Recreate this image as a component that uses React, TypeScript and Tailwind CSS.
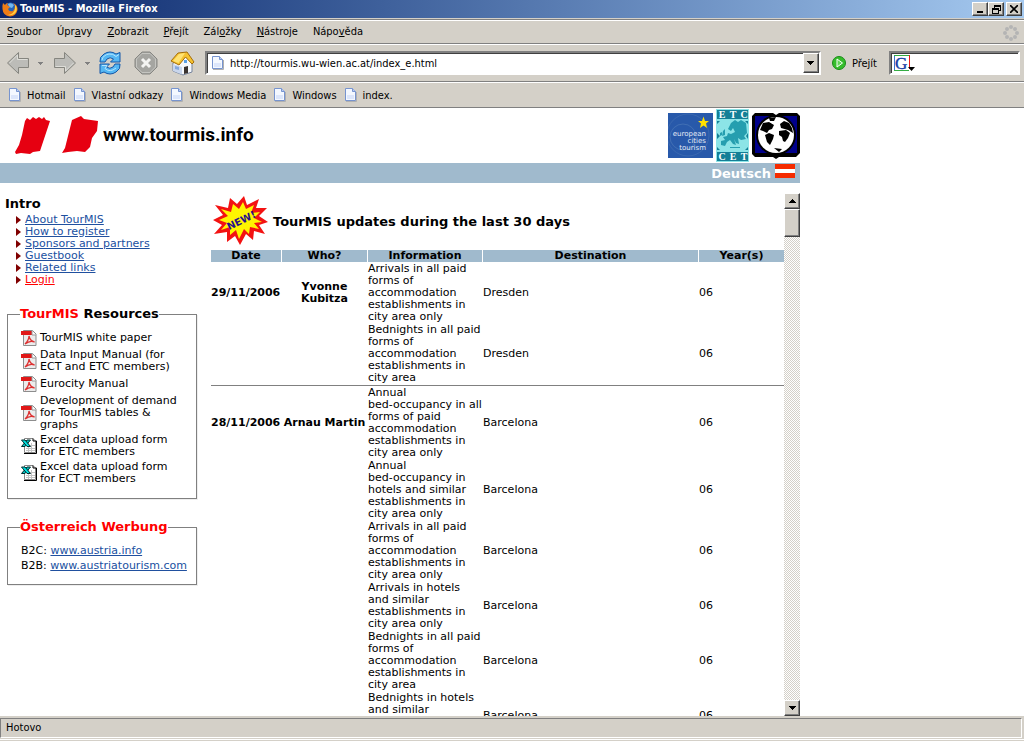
import React from "react";

const body = '[font-family:"DejaVu_Sans",sans-serif]';

function PageIcon() {
  return (
    <svg width="13" height="16" viewBox="0 0 13 16" className="shrink-0" aria-hidden="true">
      <path d="M2 14.500H12.500V5" fill="none" stroke="#b0b0b0" />
      <path d="M1.500 1.500H8.500L11.500 4.500V13.500H1.500Z" fill="#f4f8ff" stroke="#7794cf" />
      <path d="M3 8H10V12H3Z" fill="#dce6fb" />
      <path d="M8.500 1.500V4.500H11.500" fill="#b9ccf5" stroke="#7794cf" />
    </svg>
  );
}

function Firefox() {
  return (
    <svg width="16" height="16" viewBox="0 0 16 16" className="shrink-0" aria-hidden="true">
      <circle cx="8.500" cy="7.500" r="6" fill="#2563b8" />
      <path d="M6 3Q9 1 12 4L10 7L7 6Z" fill="#72b7ef" />
      <path d="M1 2L3 4Q4 2 6 2L5 4L8 6L6 8Q7 11 11 10Q13 8 13 5Q12 3 11 2Q16 4 15.500 9Q14 15 8 15.500Q1 15 .5 8Q.3 4 1 2Z" fill="#ee7c16" />
      <path d="M13 4Q16 7 14 11Q11 15 6 14Q12 13 13 8Z" fill="#ffd23f" />
    </svg>
  );
}

function Arrow({ right = false }: { right?: boolean }) {
  return (
    <svg width="24" height="24" viewBox="0 0 24 24" className={right ? "rotate-180" : ""} aria-hidden="true">
      <path d="M1.500 12L12.500 1.500V7.500H22.500V16.500H12.500V22.500Z" fill="#bcbcb8" stroke="#85857f" />
      <path d="M3.500 12L11.500 4V8.500H21.500" fill="none" stroke="#deded9" />
    </svg>
  );
}

function SmallArrow() {
  return <svg width="5" height="3" viewBox="0 0 5 3" shapeRendering="crispEdges" aria-hidden="true"><path d="M0 0H5V1H4V2H3V3H2V2H1V1H0Z" fill="#808080" /></svg>;
}

function Reload() {
  return (
    <svg width="24" height="24" viewBox="0 0 24 24" aria-hidden="true">
      <path d="M2 11Q1 6 6 3Q12 -1 18 3L22 1.500V11H12.500L15.500 8Q12 5.500 9 8L7 11Z" fill="#55b7f3" stroke="#1457a8" />
      <path d="M22 13Q23 18 18 21Q12 25 6 21L2 22.500V13H11.500L8.500 16Q12 18.500 15 16L17 13Z" fill="#55b7f3" stroke="#1457a8" />
      <path d="M4 9Q5 4 11 3Q15 2.500 18 5.500L21 3.500M4 14.500H9L7 17.500Q12 22 18 17" fill="none" stroke="#b5e5ff" />
    </svg>
  );
}

function Stop() {
  return (
    <svg width="24" height="24" viewBox="0 0 24 24" aria-hidden="true">
      <path d="M8 1H16L23 8V16L16 23H8L1 16V8Z" fill="#a5a5a1" stroke="#868682" />
      <path d="M8 2.500H16L21.500 8V16L16 21.500H8L2.500 16V8Z" fill="none" stroke="#c5c5c1" />
      <path d="M8 8L16 16M16 8L8 16" stroke="#f4f4f2" strokeWidth="3" />
    </svg>
  );
}

function Home() {
  return (
    <svg width="25" height="25" viewBox="0 0 25 25" aria-hidden="true">
      <path d="M3 12L9 8L15 5L22 12V21L13 24L3 20Z" fill="#f6f8fc" stroke="#75839c" />
      <path d="M3 13L12 16V23.500L3 20Z" fill="#c9d6ec" />
      <path d="M1 10L8 2L17 1L24 11L22 13L15.500 6L9 14Z" fill="#f5c230" stroke="#a46d0a" />
      <path d="M3 10L9 3L15 2L8.500 12Z" fill="#ffe374" />
      <path d="M14 16L18 15V22L14 23Z" fill="#3b3431" />
      <path d="M5 15L9 16V19L5 18Z" fill="#86a8de" />
      <rect x="14" y="9" width="3" height="3" fill="#5aa0e6" />
    </svg>
  );
}

function Triangle({ up = false }: { up?: boolean }) {
  return (
    <svg width="7" height="4" viewBox="0 0 7 4" className={up ? "rotate-180" : ""} shapeRendering="crispEdges" aria-hidden="true">
      <path d="M0 0H7V1H6V2H5V3H4V4H3V3H2V2H1V1H0Z" />
    </svg>
  );
}

function Dots() {
  const pts = [[8, 2], [12, 4], [14, 8], [12, 12], [8, 14], [4, 12], [2, 8], [4, 4]];
  return (
    <svg width="16" height="16" viewBox="0 0 16 16" aria-hidden="true">
      {pts.map(([x, y]) => <circle key={`${x}-${y}`} cx={x} cy={y} r="2" fill="#b4b4b4" />)}
    </svg>
  );
}

function Pdf() {
  return (
    <svg width="16" height="16" viewBox="0 0 16 16" className="shrink-0" aria-hidden="true">
      <path d="M2.500 .5H11.500L15 4V15.500H2.500Z" fill="#ececec" stroke="#8d8d8d" />
      <path d="M0 1H11V5H0Z" fill="#e01818" />
      <path d="M11 1V5H15" fill="#fff" stroke="#999" />
      <path d="M4 14Q8 10 8 6Q9 11 13.500 12Q9 10 4 14" fill="none" stroke="#dd3030" strokeWidth="1.300" />
    </svg>
  );
}

function Excel() {
  return (
    <svg width="16" height="16" viewBox="0 0 16 16" className="shrink-0" aria-hidden="true">
      <path d="M3.500 .5H12L14.500 3V14.500H3.500Z" fill="#fff" stroke="#888" />
      <path d="M12 .5V3H15.500V15.500H3" fill="none" stroke="#000" />
      <path d="M5 7.500H14M5 10.500H14M5 12.500H14M7.500 5V14M10.500 5V14" stroke="#c4c4c4" />
      <path d="M6 2H9.500L4 8.500H.5Z" fill="#00c4c4" stroke="#002c2c" />
      <path d="M.5 2H4L9.500 8.500H6Z" fill="#00e0e0" stroke="#002c2c" />
    </svg>
  );
}

function BrandMark() {
  return (
    <svg width="84" height="40" viewBox="0 0 84 40" aria-hidden="true">
      <path d="M10 5L12 2L15 4L18 1L21 3L24 1L27 3L29 1L31 4L35 5L32 14L25 35L18 36L15 38L6 37L1 38L0 36L4 29L7 19Z" fill="#e60011" />
      <path d="M57 4L66 0L69 3L76 4L83 5L82 15L77 22L75 31L70 36L62 35L53 36L47 37L50 32L53 20Z" fill="#e60011" />
    </svg>
  );
}

function CitiesLogo() {
  return (
    <svg width="45" height="45" viewBox="0 0 45 45" role="img" aria-label="european cities tourism">
      <rect width="45" height="45" fill="#2859aa" />
      <circle cx="15" cy="24" r="13" fill="none" stroke="#416fb4" />
      <circle cx="20" cy="22" r="21" fill="none" stroke="#3a68b0" />
      <path d="M35.500 3.500L37 8H41L38 10.500L39 15L35.500 12.500L32 15L33 10.500L30 8H34Z" fill="#ffe000" />
      <g fill="#e4ebf5" fontSize="7" fontFamily="DejaVu Sans" textAnchor="end"><text x="38" y="23">european</text><text x="38" y="30">cities</text><text x="38" y="37">tourism</text></g>
    </svg>
  );
}

function EtcLogo() {
  return (
    <svg width="33" height="53" viewBox="0 0 33 53" role="img" aria-label="ETC CET">
      <rect width="33" height="53" fill="#8ce4e7" />
      <path d="M1 1H32V10H1ZM1 43H32V52H1Z" fill="#147f96" />
      <path d="M1 12H4L1 15ZM32 12H29L32 15ZM1 41V38L4 41ZM32 41V38L29 41ZM1 24L4 27L1 30ZM32 24L30 27L32 30Z" fill="#147f96" />
      <path d="M12 20L15 14L19 11L22 13L25 11L30 14L31 24L28 27L30 30L25 31L22 29L23 35L20 34L18 30L20 36L17 35L14 31L11 33L9 37L5 36L5 32L9 31L7 28L11 27L12 24L15 25L19 23L17 19L15 22Z" fill="#259eaf" />
      <path d="M7 22L9 20V26L6 27ZM4 24L6 23V26L4 27ZM14 38H24V39H14Z" fill="#259eaf" />
      <g fill="#fff" fontSize="10" fontWeight="bold" fontFamily="Liberation Serif" textAnchor="middle"><text x="6" y="9">E</text><text x="17" y="9">T</text><text x="28" y="9">C</text><text x="6" y="51">C</text><text x="17" y="51">E</text><text x="28" y="51">T</text></g>
    </svg>
  );
}

function Globe() {
  return (
    <svg width="48" height="46" viewBox="0 0 48 46" role="img" aria-label="World">
      <path d="M3 0H21L24 2L27 0H45L48 3V40L44 44H27L24 46L21 44H3L0 41V3Z" />
      <path d="M3 3H45V40H3Z" fill="#00008b" />
      <circle cx="24" cy="22" r="20" />
      <circle cx="24" cy="22" r="18" fill="#fff" />
      <path d="M8 17L11 10L17 9L22 12L20 16L17 17L15 20L11 18ZM13 22L17 20L22 22L21 26L18 32L15 29ZM17 5L24 4L22 8L18 8ZM28 11L32 8L37 10L40 15L41 20L36 17L29 15ZM27 18L34 17L38 20L36 25L33 29L31 28L30 24L27 22ZM22 35L30 36L27 39Z" />
    </svg>
  );
}

function NewBurst() {
  return (
    <svg width="56" height="50" viewBox="0 0 56 50" role="img" aria-label="New!">
      <path d="M2 9L15 12L17 2L24 8L31 0L34 9L46 3L43 12L54 12L46 20L55 26L46 29L52 38L41 35L40 44L33 38L27 49L22 40L14 46L14 36L1 38L9 29L0 24L10 19Z" fill="#f31212" />
      <path d="M8 13L18 16L20 8L26 13L30 6L33 13L41 9L38 17L47 16L41 22L49 26L41 27L46 33L37 31L36 38L31 33L26 43L23 34L17 39L17 31L8 34L14 27L6 24L15 20Z" fill="#fff500" />
      <text x="28" y="28" textAnchor="middle" fontFamily="DejaVu Sans" fontSize="10" fontWeight="bold" fill="#28108b" transform="rotate(-26 28 24)">NEW!</text>
    </svg>
  );
}

function Restore() {
  return <svg width="9" height="9" viewBox="0 0 9 9" shapeRendering="crispEdges" aria-hidden="true"><path d="M2 0H9V6H7V5H8V2H3V3H2ZM0 3H7V9H0ZM1 5V8H6V5Z" fillRule="evenodd" /></svg>;
}

const raised = "border border-t-white border-l-white border-b-[#404040] border-r-[#404040] bg-[#d4d0c8] shadow-[inset_-1px_-1px_0_#808080]";
const sunken = "border-2 border-t-[#808080] border-l-[#808080] border-b-white border-r-white shadow-[inset_1px_1px_0_#404040]";

const menus = [["", "S", "oubor"], ["Úpr", "a", "vy"], ["", "Z", "obrazit"], ["", "P", "řejít"], ["Zál", "o", "žky"], ["", "N", "ástroje"], ["Nápo", "v", "ěda"]];
const bookmarks = ["Hotmail", "Vlastní odkazy", "Windows Media", "Windows", "index."];
const links = ["About TourMIS", "How to register", "Sponsors and partners", "Guestbook", "Related links", "Login"];
const resources = [
  { lines: ["TourMIS white paper"], excel: false },
  { lines: ["Data Input Manual (for", "ECT and ETC members)"], excel: false },
  { lines: ["Eurocity Manual"], excel: false },
  { lines: ["Development of demand", "for TourMIS tables &", "graphs"], excel: false },
  { lines: ["Excel data upload form", "for ETC members"], excel: true },
  { lines: ["Excel data upload form", "for ECT members"], excel: true },
];

type Row = { date?: string; who?: string[]; info: string[]; city: string };
const groups: Row[][] = [
  [
    { date: "29/11/2006", who: ["Yvonne", "Kubitza"], info: ["Arrivals in all paid", "forms of", "accommodation", "establishments in", "city area only"], city: "Dresden" },
    { info: ["Bednights in all paid", "forms of", "accommodation", "establishments in", "city area"], city: "Dresden" },
  ],
  [
    { date: "28/11/2006", who: ["Arnau Martin"], info: ["Annual", "bed-occupancy in all", "forms of paid", "accommodation", "establishments in", "city area only"], city: "Barcelona" },
    { info: ["Annual", "bed-occupancy in", "hotels and similar", "establishments in", "city area only"], city: "Barcelona" },
    { info: ["Arrivals in all paid", "forms of", "accommodation", "establishments in", "city area only"], city: "Barcelona" },
    { info: ["Arrivals in hotels", "and similar", "establishments in", "city area only"], city: "Barcelona" },
    { info: ["Bednights in all paid", "forms of", "accommodation", "establishments in", "city area"], city: "Barcelona" },
    { info: ["Bednights in hotels", "and similar", "establishments in", "city area"], city: "Barcelona" },
  ],
];

function Lines({ lines }: { lines: string[] }) {
  return <>{lines.map((l, i) => <span key={i} className="block whitespace-nowrap">{l}</span>)}</>;
}

function Chrome() {
  return (
    <header className="shrink-0 bg-[#d4d0c8]">
      <div className="flex h-[18px] items-center gap-0.5 bg-gradient-to-r from-[#0a246a] to-[#a6caf0] px-0.5 text-white">
        <Firefox />
        <h1 className="flex-1 text-[11px] font-bold">TourMIS - Mozilla Firefox</h1>
        <div className="flex">
          <button aria-label="Minimize" className={`flex h-3.5 w-4 items-end justify-center pb-0.5 text-black ${raised}`}><span className="h-0.5 w-1.5 bg-black" /></button>
          <button aria-label="Restore" className={`mr-0.5 flex h-3.5 w-4 items-center justify-center text-black ${raised}`}><Restore /></button>
          <button aria-label="Close" className={`flex h-3.5 w-4 items-center justify-center text-black ${raised}`}><svg width="8" height="8" viewBox="0 0 8 8" aria-hidden="true"><path d="M0 0L8 8M8 0L0 8" stroke="#000" strokeWidth="1.600" /></svg></button>
        </div>
      </div>
      <div className="mt-px flex h-[25px] items-center justify-between border-y border-t-[#808080] border-b-[#808080] px-[7px] pt-0.5 shadow-[inset_0_1px_0_#fff]">
        <nav className="flex gap-[15px]">
          {menus.map(([a, b, c]) => <button key={a + b + c}>{a}<u>{b}</u>{c}</button>)}
        </nav>
        <div className="-mr-0.5"><Dots /></div>
      </div>
      <div className="flex h-[38px] items-center border-y border-t-white border-b-[#808080] pr-1 pl-1.5">
        <button aria-label="Back"><Arrow /></button>
        <button aria-label="Back history" className="ml-2"><SmallArrow /></button>
        <button aria-label="Forward" className="ml-2.5"><Arrow right /></button>
        <button aria-label="Forward history" className="ml-2"><SmallArrow /></button>
        <button aria-label="Reload" className="ml-2"><Reload /></button>
        <button aria-label="Stop" className="ml-3"><Stop /></button>
        <button aria-label="Home" className="ml-3"><Home /></button>
        <div className={`ml-2.5 flex h-6 min-w-0 flex-1 items-center bg-white pl-1 ${sunken}`}>
          <PageIcon />
          <input aria-label="Address" defaultValue="http://tourmis.wu-wien.ac.at/index_e.html" className="ml-1.5 min-w-0 flex-1 bg-transparent pt-0.5 outline-none" />
          <button aria-label="Show addresses" className={`flex h-5 w-4 items-center justify-center ${raised}`}><Triangle /></button>
        </div>
        <button className="mr-3 ml-[11px] flex items-center gap-1.5">
          <svg width="14" height="14" viewBox="0 0 14 14" aria-hidden="true"><circle cx="7" cy="7" r="6.500" fill="#36bd2b" stroke="#198a18" /><path d="M5 3L10.500 7L5 11Z" fill="#5fd455" stroke="#fff" /></svg>
          <span className="pt-0.5">Přejít</span>
        </button>
        <div className={`flex h-6 w-[131px] items-center bg-white pl-0.5 ${sunken}`}>
          <svg width="22" height="18" viewBox="0 0 22 18" aria-hidden="true"><rect x="1" y="1" width="16" height="16" fill="#fff" /><path d="M1.500 1V17" stroke="#3a74d0" /><path d="M1 1.500H16M1 16.500H16" stroke="#36ad43" /><path d="M16.500 1V15" stroke="#e71919" /><text x="2" y="15" fontFamily="Liberation Serif" fontSize="17" fill="#173da5" stroke="#173da5" strokeWidth=".4">G</text><path d="M15 13H22L18.500 17Z" /></svg>
          <input aria-label="Search" className="min-w-0 flex-1 bg-transparent outline-none" />
        </div>
      </div>
      <nav className="flex h-[26px] items-center gap-[7px] border-y border-t-white border-b-[#808080] pl-2">
        {bookmarks.map((b) => <a key={b} href="#" className="flex items-center gap-1.5"><PageIcon /><span className="pt-0.5">{b}</span></a>)}
      </nav>
    </header>
  );
}

function Sidebar() {
  const box = "mr-2 ml-[7px] border border-[#808080] shadow-[inset_1px_1px_0_#fff,1px_1px_0_#eee]";
  return (
    <aside className="w-[205px] shrink-0 text-[11px] leading-3">
      <h2 className="mt-[13px] ml-[5px] text-[13px] leading-4 font-bold">Intro</h2>
      <ul className="mt-0.5 ml-4">
        {links.map((l) => (
          <li key={l} className="flex items-center gap-1">
            <svg width="5" height="8" viewBox="0 0 5 8" aria-hidden="true"><path d="M0 0L5 4L0 8Z" fill="#800000" /></svg>
            <a href="#" className={l === "Login" ? "text-[#ff0000] underline" : "text-[#20509f] underline"}>{l}</a>
          </li>
        ))}
      </ul>
      <fieldset className={`mt-5 h-[193px] ${box}`}>
        <legend className="ml-3 text-[13px] leading-4 font-bold"><span className="text-[#ff0000]">TourMIS</span> Resources</legend>
        <ul className="mt-2 ml-[13px] flex flex-col gap-[3px]">
          {resources.map((r, i) => <li key={i} className="flex items-center gap-[3px]">{r.excel ? <Excel /> : <Pdf />}<div><Lines lines={r.lines} /></div></li>)}
        </ul>
      </fieldset>
      <fieldset className={`mt-5 h-[66px] ${box}`}>
        <legend className="ml-3 text-[13px] leading-4 font-bold text-[#ff0000]">Österreich Werbung</legend>
        <div className="mt-2 ml-[13px] leading-[15px]">
          <p>B2C: <a href="#" className="text-[#20509f] underline">www.austria.info</a></p>
          <p>B2B: <a href="#" className="text-[#20509f] underline">www.austriatourism.com</a></p>
        </div>
      </fieldset>
    </aside>
  );
}

function Updates() {
  return (
    <section className="mt-2.5 flex min-w-0 flex-1">
      <div className="min-w-0 flex-1 overflow-hidden pl-1.5">
        <div className="flex h-14 items-center gap-1 pl-0.5"><NewBurst /><h2 className="pt-0.5 text-[13px] font-bold">TourMIS updates during the last 30 days</h2></div>
        <table className="-ml-px w-[calc(100%+2px)] table-fixed border-separate border-spacing-px text-[11px] leading-3">
          <colgroup><col className="w-[70px]" /><col className="w-[85px]" /><col className="w-[114px]" /><col /><col className="w-[85px]" /></colgroup>
          <thead><tr className="bg-[#a0bacd]">{["Date", "Who?", "Information", "Destination", "Year(s)"].map((h) => <th key={h} className="p-0">{h}</th>)}</tr></thead>
          {groups.map((rows, g) => (
            <tbody key={g}>
              {g > 0 && <tr><td colSpan={5} className="h-px bg-[#808080] p-0" /></tr>}
              {rows.map((r, i) => (
                <tr key={i}>
                  <td className="p-0 font-bold">{r.date}</td>
                  <td className="p-0 text-center font-bold">{r.who && <Lines lines={r.who} />}</td>
                  <td className="p-0"><Lines lines={r.info} /></td>
                  <td className="p-0">{r.city}</td>
                  <td className="p-0">06</td>
                </tr>
              ))}
            </tbody>
          ))}
        </table>
      </div>
      <div className="flex w-4 shrink-0 flex-col bg-[repeating-conic-gradient(#d4d0c8_0_25%,#fff_0_50%)] bg-[length:2px_2px]">
        <button aria-label="Scroll up" className={`flex h-4 items-center justify-center ${raised}`}><Triangle up /></button>
        <div className={`h-7 ${raised}`} />
        <button aria-label="Scroll down" className={`mt-auto flex h-4 items-center justify-center ${raised}`}><Triangle /></button>
      </div>
    </section>
  );
}

export default function App() {
  return (
    <div className={`flex h-screen flex-col overflow-hidden bg-white text-black ${body}`}>
      <div className='text-[11px] [font-family:"DejaVu_Sans_Condensed","DejaVu_Sans",sans-serif]'><Chrome /></div>
      <main className="flex min-h-0 w-full max-w-[800px] flex-1 flex-col">
        <div className="flex h-[55px] shrink-0 items-center">
          <a href="#" className='ml-[15px] flex items-center gap-1 text-[19px] font-bold [font-family:Roboto,sans-serif]'><BrandMark />www.tourmis.info</a>
          <div className="ml-auto flex items-center gap-[3px]"><CitiesLogo /><EtcLogo /><Globe /></div>
        </div>
        <div className="flex h-5 shrink-0 items-center justify-end gap-1 bg-[#a0bacd] pr-[5px] text-[13px] font-bold text-white">
          <a href="#" className="pt-px">Deutsch</a>
          <svg width="20" height="14" viewBox="0 0 20 14" className="mb-1" role="img" aria-label="Austria"><path d="M0 0H20V14H0Z" fill="#f52b00" /><path d="M0 5H20V9H0Z" fill="#fff" /></svg>
        </div>
        <div className="flex min-h-0 flex-1 overflow-hidden"><Sidebar /><Updates /></div>
      </main>
      <footer className='flex h-[25px] shrink-0 flex-col bg-[#d4d0c8] pt-0.5 text-[11px] [font-family:"DejaVu_Sans_Condensed","DejaVu_Sans",sans-serif]'>
        <p className="mr-0.5 flex h-5 items-center border border-t-[#808080] border-l-[#808080] border-r-white border-b-white pt-px pl-[5px]">Hotovo</p>
        <div className="mt-px h-px bg-white" />
      </footer>
    </div>
  );
}
